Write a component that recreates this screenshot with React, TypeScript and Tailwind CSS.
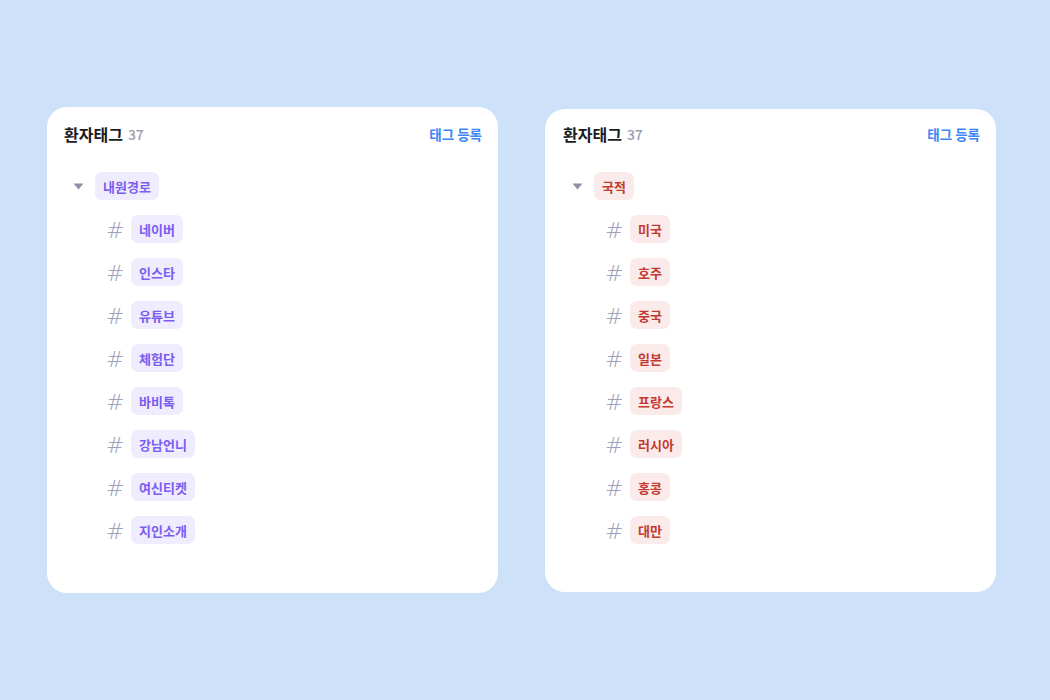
const groups = [
  {
    title: '내원경로',
    tone: 'violet',
    items: ['네이버', '인스타', '유튜브', '체험단', '바비톡', '강남언니', '여신티켓', '지인소개'],
  },
  {
    title: '국적',
    tone: 'red',
    items: ['미국', '호주', '중국', '일본', '프랑스', '러시아', '홍콩', '대만'],
  },
];

const chipTone: Record<string, string> = {
  violet: 'bg-[#efecfd] text-[#7b5cf0]',
  red: 'bg-[#fbeaea] text-[#c23a32]',
};

function Chip({ label, tone }: { label: string; tone: string }) {
  return (
    <span
      className={`inline-flex h-[28px] items-center rounded-[7px] px-[8px] text-[13px] font-bold leading-none ${chipTone[tone]}`}
    >
      {label}
    </span>
  );
}

function TagCard({ group, className }: { group: (typeof groups)[number]; className: string }) {
  return (
    <div className={`w-[451px] rounded-[20px] bg-white pr-[16px] ${className}`}>
      <div className="flex h-[22px] items-center justify-between">
        <div className="flex items-center gap-[5px]">
          <span className="text-[16px] font-bold text-[#1b1c22]">환자태그</span>
          <span className="text-[14px] font-medium text-[#9a9cae]">37</span>
        </div>
        <button className="text-[13.5px] font-bold text-[#3d86f5]">태그 등록</button>
      </div>

      <div className="mt-[27px] flex items-center gap-[11px] pl-[9px]">
        <svg width="11" height="7" viewBox="0 0 11 7" className="shrink-0">
          <path d="M0.5 0.5 H10.5 L5.5 6.5 Z" fill="#8f90a6" />
        </svg>
        <Chip label={group.title} tone={group.tone} />
      </div>

      <div className="mt-[15px] flex flex-col gap-[15px]">
        {group.items.map((item) => (
          <div key={item} className="flex items-center pl-[42px]">
            <span
              className="w-[25px] translate-y-[2px] text-[22px] font-light leading-none text-[#a0a2b9]"
              style={{ fontFamily: '"DejaVu Sans", sans-serif' }}
            >
              #
            </span>
            <Chip label={item} tone={group.tone} />
          </div>
        ))}
      </div>
    </div>
  );
}

export default function App() {
  return (
    <div
      className="flex min-h-[700px] w-full items-start gap-[47px] bg-[#cde1f8] pl-[47px] pt-[107px]"
      style={{ fontFamily: '"Noto Sans CJK KR", "Noto Sans", sans-serif' }}
    >
      <TagCard group={groups[0]} className="h-[486px] pl-[17px] pt-[16px]" />
      <TagCard group={groups[1]} className="mt-[2px] h-[483px] pl-[18px] pt-[14px]" />
    </div>
  );
}
